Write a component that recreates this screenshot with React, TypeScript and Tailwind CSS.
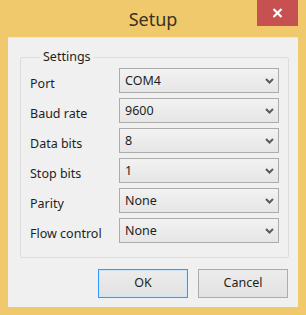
import React from 'react';

const rows = [
  { label: 'Port', value: 'COM4' },
  { label: 'Baud rate', value: '9600' },
  { label: 'Data bits', value: '8' },
  { label: 'Stop bits', value: '1' },
  { label: 'Parity', value: 'None' },
  { label: 'Flow control', value: 'None' },
];

const Chevron = () => (
  <svg width="9" height="6" viewBox="0 0 9 6" className="shrink-0">
    <path d="M1 1 L4.5 4.5 L8 1" fill="none" stroke="#5a5a5a" strokeWidth="2" />
  </svg>
);

const App: React.FC = () => {
  return (
    <div
      className="w-[306px] h-[315px] bg-[#f0c96c] flex flex-col text-[#1e1e1e]"
      style={{ fontFamily: '"Noto Sans", "Open Sans", sans-serif' }}
    >
      {/* Title bar */}
      <div className="relative h-[37px] flex items-center justify-center shrink-0">
        <span className="text-[18px] text-[#3a3222] mt-[2px]">Setup</span>
        <button className="absolute right-[8px] top-0 w-[41px] h-[26px] bg-[#c75050] flex items-center justify-center">
          <svg width="11" height="10" viewBox="0 0 11 10">
            <path d="M1.5 1 L9.5 9 M9.5 1 L1.5 9" stroke="#ffffff" strokeWidth="2.2" />
          </svg>
        </button>
      </div>

      {/* Client area */}
      <div className="flex-1 mx-[8px] mb-[8px] bg-[#f0f0f0] border-t border-[#f7e6bd] flex flex-col px-[12px] pt-[11px]">
        <fieldset className="border border-[#dcdcdc] rounded-[2px] mr-[-2px] h-[209px] px-[9px]">
          <legend className="ml-[10px] px-[3px] text-[12.5px] leading-[16px]">Settings</legend>
          <div className="flex flex-col gap-[5px] mt-[3px]">
            {rows.map((r) => (
              <div key={r.label} className="flex h-[25px]">
                <div className="w-[89px] text-[12.5px] pt-[8px] leading-[16px]">{r.label}</div>
                <div className="w-[160px] h-[25px] border border-[#acacac] bg-gradient-to-b from-[#f2f2f2] to-[#e6e6e6] flex items-center justify-between pl-[5px] pr-[4px]">
                  <span className="text-[12.5px] leading-[16px]">{r.value}</span>
                  <Chevron />
                </div>
              </div>
            ))}
          </div>
        </fieldset>

        <div className="flex justify-end gap-[10px] mt-[11px] mr-[-2px]">
          <button className="w-[90px] h-[29px] border border-[#3399ff] shadow-[inset_0_0_0_1px_#cde6fb] bg-gradient-to-b from-[#ececec] to-[#e2e2e2] text-[12.5px]">
            OK
          </button>
          <button className="w-[90px] h-[29px] border border-[#acacac] bg-gradient-to-b from-[#ececec] to-[#e2e2e2] text-[12.5px]">
            Cancel
          </button>
        </div>
      </div>
    </div>
  );
};

export default App;
